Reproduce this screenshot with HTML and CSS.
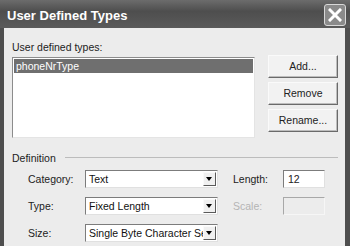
FILE: index.html
```html
<!DOCTYPE html>
<html lang="en">
<head>
	<meta charset="UTF-8">
	<title>User Defined Types</title>
	<link rel="stylesheet" href="styles.css">
</head>
<body>
	<div class="window">
		<div class="titlebar">
			<span class="title">User Defined Types</span>
			<span class="close">
				<svg width="14" height="14" viewBox="0 0 14 14"><path d="M2 2L12 12M12 2L2 12" stroke="#fff" stroke-width="3" stroke-linecap="square"/></svg>
			</span>
		</div>
		<div class="content">
			<div class="caption">User defined types:</div>
			<div class="types">
				<div class="listbox">
					<div class="item selected">phoneNrType</div>
				</div>
				<div class="buttons">
					<div class="btn">Add...</div>
					<div class="btn">Remove</div>
					<div class="btn">Rename...</div>
				</div>
			</div>
			<div class="group">
				<span>Definition</span>
				<span class="rule"></span>
			</div>
			<div class="fields">
				<span class="lbl">Category:</span>
				<div class="combo"><span class="val">Text</span><span class="arrow"></span></div>
				<span class="lbl">Length:</span>
				<div class="edit">12</div>

				<span class="lbl">Type:</span>
				<div class="combo"><span class="val">Fixed Length</span><span class="arrow"></span></div>
				<span class="lbl off">Scale:</span>
				<div class="edit off"></div>

				<span class="lbl">Size:</span>
				<div class="combo"><span class="val">Single Byte Character Set</span><span class="arrow"></span></div>
			</div>
		</div>
	</div>
</body>
</html>
```
FILE: styles.css
```css
*{
	margin: 0;
	padding: 0;
	box-sizing: border-box;
}
body{
	width: 350px;
	height: 246px;
	overflow: hidden;
	font-family: "Liberation Sans", Arial, sans-serif;
	font-size: 10.5px;
	color: #222;
	background: #555;
}
.window{
	height: 246px;
	border-left: 4px solid #4e4e4e;
	border-right: 5px solid #4e4e4e;
	background: #ececec;
}
.titlebar{
	height: 28px;
	margin: 0 -5px 0 -4px;
	padding: 0 4px 0 7px;
	display: flex;
	align-items: center;
	justify-content: space-between;
	background: linear-gradient(#6c6c6c, #4e4e4e 40%, #5a5a5a);
}
.title{
	color: #fff;
	font-weight: bold;
	font-size: 13px;
	margin-top: 3px;
}
.close{
	width: 22px;
	height: 22px;
	margin-top: 2px;
	display: flex;
	align-items: center;
	justify-content: center;
	background: #8a8a8a;
	border: 1px solid #d8d8d8;
	border-radius: 3px;
}
.content{
	padding: 13px 0 0 8px;
}
.caption{
	height: 13px;
	line-height: 13px;
}
.types{
	display: flex;
	margin-top: 3px;
}
.listbox{
	width: 243px;
	height: 81px;
	background: #fff;
	border: 1px solid;
	border-color: #8c8c8c #e4e4e4 #e4e4e4 #8c8c8c;
	padding: 1px;
}
.item{
	height: 14px;
	line-height: 14px;
	padding-left: 2px;
}
.selected{
	background: #6f6f6f;
	color: #fff;
}
.buttons{
	margin: -2px 0 0 13px;
	display: flex;
	flex-direction: column;
	gap: 4px;
}
.btn{
	width: 70px;
	height: 23px;
	line-height: 21px;
	text-align: center;
	background: #f2f2f2;
	border: 1px solid;
	border-color: #fafafa #6a6a6a #6a6a6a #fafafa;
	box-shadow: inset -1px -1px 0 #bdbdbd;
}
.group{
	display: flex;
	align-items: center;
	margin-top: 13px;
	height: 13px;
	padding-right: 7px;
}
.rule{
	flex: 1;
	margin-left: 9px;
	border-top: 1px solid #bcbcbc;
}
.fields{
	display: grid;
	grid-template-columns: 57px 148px 50px 42px;
	grid-auto-rows: 18px;
	row-gap: 9px;
	margin: 6px 0 0 16px;
	align-items: center;
}
.off{
	color: #b4b4b4;
}
.combo{
	width: 133px;
	height: 18px;
	display: flex;
	align-items: center;
	background: #fff;
	border: 1px solid;
	border-color: #7c7c7c #e0e0e0 #e0e0e0 #7c7c7c;
	padding: 1px;
}
.val{
	flex: 1;
	overflow: hidden;
	white-space: nowrap;
	padding-left: 2px;
	color: #111;
}
.arrow{
	width: 13px;
	height: 14px;
	flex-shrink: 0;
	position: relative;
	background: #f0f0f0;
	border: 1px solid;
	border-color: #fafafa #5a5a5a #5a5a5a #fafafa;
}
.arrow::after{
	content: "";
	position: absolute;
	left: 2px;
	top: 4px;
	border-left: 3.5px solid transparent;
	border-right: 3.5px solid transparent;
	border-top: 4px solid #000;
}
.edit{
	height: 18px;
	line-height: 16px;
	padding-left: 4px;
	background: #fff;
	border: 1px solid;
	border-color: #7c7c7c #e0e0e0 #e0e0e0 #7c7c7c;
}
.edit.off{
	background: #ececec;
	border-color: #a8a8a8 #f6f6f6 #f6f6f6 #a8a8a8;
}
```
